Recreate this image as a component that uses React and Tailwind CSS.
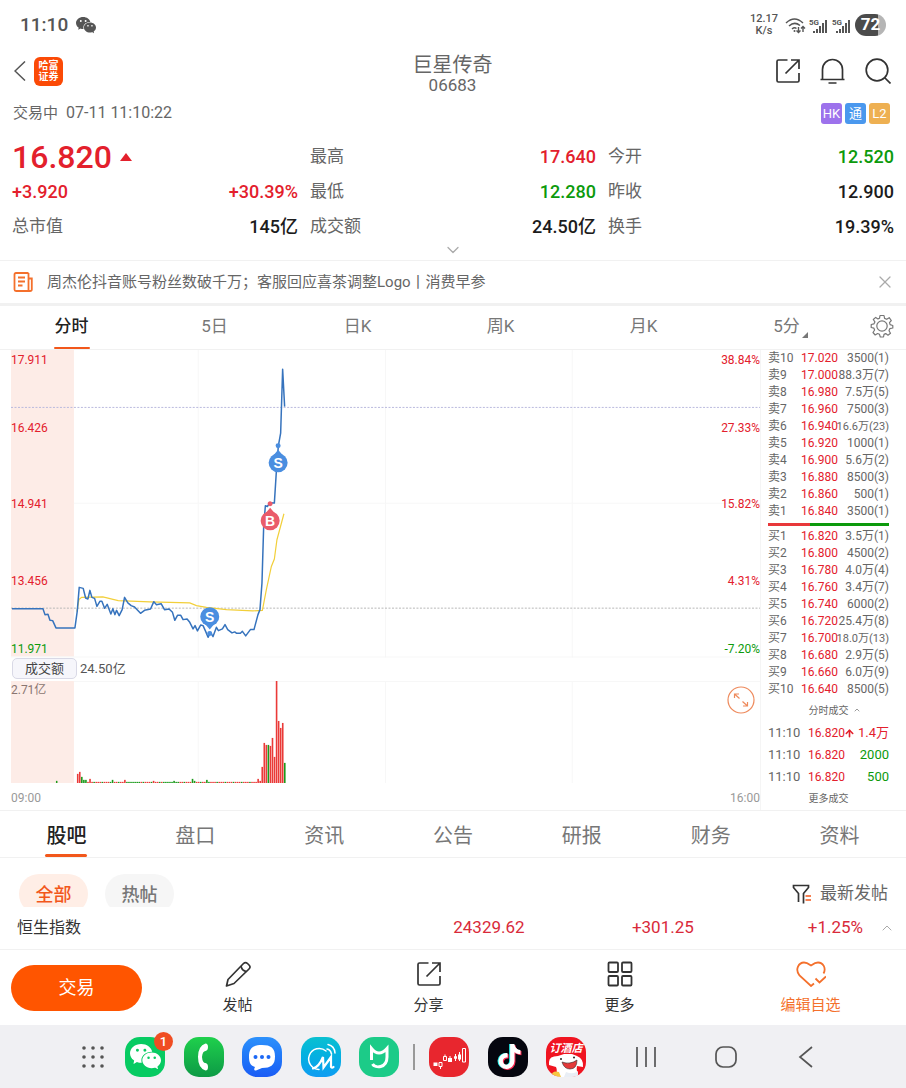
import { useState } from 'react';
import { ArrowUp, ChevronDown, ChevronUp, X } from 'lucide-react';
import { IoLogoWechat } from 'react-icons/io5';
import { FaTiktok } from 'react-icons/fa';

const QUOTES = [
  { label: '最高', value: '17.640', color: 'text-[#e3202c]' },
  { label: '今开', value: '12.520', color: 'text-[#0c9a0c]' },
  { label: '', value: '+30.39%', color: 'text-[#e3202c]' },
  { label: '最低', value: '12.280', color: 'text-[#0c9a0c]' },
  { label: '昨收', value: '12.900', color: 'text-[#1c1c1c]' },
  { label: '总市值', value: '145亿', color: 'text-[#1c1c1c]' },
  { label: '成交额', value: '24.50亿', color: 'text-[#1c1c1c]' },
  { label: '换手', value: '19.39%', color: 'text-[#1c1c1c]' },
];

const PERIODS = ['分时', '5日', '日K', '周K', '月K', '5分'];
const SECTIONS = ['股吧', '盘口', '资讯', '公告', '研报', '财务', '资料'];

const ASKS = [
  ['卖10', '17.020', '3500(1)'],
  ['卖9', '17.000', '88.3万(7)'],
  ['卖8', '16.980', '7.5万(5)'],
  ['卖7', '16.960', '7500(3)'],
  ['卖6', '16.940', '16.6万(23)'],
  ['卖5', '16.920', '1000(1)'],
  ['卖4', '16.900', '5.6万(2)'],
  ['卖3', '16.880', '8500(3)'],
  ['卖2', '16.860', '500(1)'],
  ['卖1', '16.840', '3500(1)'],
];

const BIDS = [
  ['买1', '16.820', '3.5万(1)'],
  ['买2', '16.800', '4500(2)'],
  ['买3', '16.780', '4.0万(4)'],
  ['买4', '16.760', '3.4万(7)'],
  ['买5', '16.740', '6000(2)'],
  ['买6', '16.720', '25.4万(8)'],
  ['买7', '16.700', '18.0万(13)'],
  ['买8', '16.680', '2.9万(5)'],
  ['买9', '16.660', '6.0万(9)'],
  ['买10', '16.640', '8500(5)'],
];

const TRADES = [
  { time: '11:10', price: '16.820', qty: '1.4万', up: true },
  { time: '11:10', price: '16.820', qty: '2000', up: false },
  { time: '11:10', price: '16.820', qty: '500', up: false },
];

const AXIS = [
  { y: 14, price: '17.911', pct: '38.84%', up: true },
  { y: 82, price: '16.426', pct: '27.33%', up: true },
  { y: 158, price: '14.941', pct: '15.82%', up: true },
  { y: 235, price: '13.456', pct: '4.31%', up: true },
  { y: 303, price: '11.971', pct: '-7.20%', up: false },
];

const PRICE_LINE =
  '1,259 32,259 34,265 37,264.7 39,270.7 41.7,271 45,278.3 64,278.3 66.3,261.7 68.3,237.7 72.3,238.7 74.7,248.3 77,249.3 79,240.7 81,247.7 83.7,248.7 86,256.7 89,251.7 91,251.7 93.7,258.7 96.3,254.7 100,264.3 102,259 104,265 105.7,260.7 108.3,266 111.3,260 113.7,247.7 117,253.3 120.3,256 123.7,257.3 129.7,263.7 133.7,260.7 139.7,259.3 143,252 145.7,255 150.3,254 153.7,260 158.3,259.3 161.7,262.7 164,270.7 166.7,265.7 170,265.7 172.3,270 176.3,269.3 179,272.7 182.3,279.3 184.3,276 186.7,281.3 190,275.3 192.3,276 195,282 197.3,287.7 199.7,282.7 202.3,287 205.7,277.7 207.7,281 211.7,279.3 214.3,275 217,280 221.3,283.3 224,282.3 226,283.7 229.7,283.7 231.7,281.7 235,286.3 239.7,280 243.3,280 247.3,265 249.3,260 251.3,233.3 253,176.7 254.7,156 256.7,156.7 259.3,153 263.7,153.3 265.7,121.7 267.7,96 270,83.3 272,19.3 274,56.7';

const AVG_LINE =
  '66,262 68,250 70.7,247.7 92,247.3 107.3,251 139,252.3 179,253.3 185.7,256 195.7,257.7 215.7,260 242,261.3 251.7,260.7 255.7,240 260.7,216.7 263.7,209.3 266.3,190 273.3,164';

// minute bars that stand out, index -> [height, isUp]; the rest are flat
const SPIKES = {
  0: [10, 1], 1: [12, 1], 2: [7, 0], 3: [4, 0], 4: [4, 0], 5: [2, 1], 6: [5, 1],
  17: [4, 0], 23: [4, 1], 37: [3, 1], 47: [3, 0], 56: [5, 0], 57: [3, 0], 63: [4, 0],
  88: [5, 1], 89: [3, 1], 90: [17, 1], 91: [41, 1], 92: [39, 1], 93: [39, 0],
  94: [38, 1], 95: [46, 1], 96: [27, 1], 97: [103, 1], 98: [63, 1], 99: [56, 1],
  100: [61, 1], 101: [21, 0],
};

const VOLUME = Array.from({ length: 102 }, (_, i) => {
  if (SPIKES[i]) return { h: SPIKES[i][0], up: SPIKES[i][1] === 1 };
  const green = (i > 23 && i < 31) || (i > 41 && i < 50) || i % 4 === 0;
  return { h: 2, up: !green };
});

const ShareIcon = ({ className }) => (
  <svg viewBox="0 0 24 24" className={className} fill="none" stroke="currentColor" strokeWidth="1.7">
    <path d="M11.5 1H2.5Q1 1 1 2.5V21.5Q1 23 2.5 23H21.5Q23 23 23 21.5V14" />
    <path d="M15 1H23V10M23 1L9.5 14.5" />
  </svg>
);

const SignalIcon = () => (
  <div className="flex w-5 flex-col">
    <span className="text-[8px] leading-[9px] font-bold">5G</span>
    <svg viewBox="0 0 20 10" className="-mt-1 h-[10px] w-5 overflow-visible" fill="currentColor">
      <rect x="4" y="8" width="2" height="2" />
      <rect x="7" y="6" width="2" height="4" />
      <rect x="10" y="3" width="2" height="7" />
      <rect x="13" y="0" width="2" height="10" />
      <rect x="16" y="-3" width="2" height="13" />
    </svg>
  </div>
);

const StatusBar = () => (
  <div className="flex h-[50px] items-center justify-between px-5 text-[#555]">
    <div className="flex items-center gap-2">
      <span className="text-[19px] font-medium">11:10</span>
      <IoLogoWechat className="size-5" />
    </div>
    <div className="flex items-center gap-[3px]">
      <div className="mr-1 text-center text-[11px] leading-3 font-medium">
        <div>12.17</div>
        <div>K/s</div>
      </div>
      <svg viewBox="0 0 21 17" className="h-[17px] w-[21px]" fill="none" stroke="currentColor" strokeWidth="1.5">
        <path d="M1 6Q9.500 -2 18 6M4 9Q9.500 4 15 8.500M7 12Q9.500 10 11.500 11.500" />
        <circle cx="9.500" cy="14" r="1" fill="currentColor" stroke="none" />
        <path d="M13.500 10V15.500M11.500 13.500L13.500 15.500L15.500 13.500M18 15V9.500M16 11.500L18 9.500L20 11.500" strokeWidth="1.400" />
      </svg>
      <SignalIcon />
      <SignalIcon />
      <div className="flex h-[22px] w-[31px] items-center justify-center rounded-full bg-linear-to-r from-[#4b4b4b] from-74% to-[#b5b5b5] to-74% text-[17px] font-bold text-white">
        72
      </div>
    </div>
  </div>
);

const Header = () => (
  <header className="flex h-[42px] items-center text-[#333]">
    <div className="flex flex-1 items-center gap-2 pl-[14px]">
      <button type="button" aria-label="返回" className="text-[#555]">
        <svg viewBox="0 0 12 20" className="h-5 w-3" fill="none" stroke="currentColor" strokeWidth="1.5">
          <path d="M11 0.500L1 10L11 19.500" />
        </svg>
      </button>
      <div className="flex size-[29px] flex-col items-center justify-center rounded-md bg-[#fb4a06] text-[10px] leading-[11px] font-bold text-white">
        <span>哈富</span>
        <span>证券</span>
      </div>
    </div>
    <div className="pt-[3px] text-center text-[#666]">
      <h1 className="text-[20px] leading-6">巨星传奇</h1>
      <div className="text-[17px] leading-4">06683</div>
    </div>
    <div className="flex flex-1 items-center justify-end gap-5 pr-[15px]">
      <button type="button" aria-label="分享">
        <ShareIcon className="size-6" />
      </button>
      <button type="button" aria-label="提醒">
        <svg viewBox="0 0 25 26" className="h-[26px] w-[25px]" fill="none" stroke="currentColor" strokeWidth="1.700">
          <path d="M2.500 21.500V11.500A10 10 0 0 1 22.500 11.500V21.500M0.500 21.500H24.500M8.500 25H16.500" />
        </svg>
      </button>
      <button type="button" aria-label="搜索">
        <svg viewBox="0 0 26 26" className="size-[26px]" fill="none" stroke="currentColor" strokeWidth="1.700">
          <circle cx="12" cy="12" r="10.800" />
          <path d="M19.500 19.500L25.500 25.500" />
        </svg>
      </button>
    </div>
  </header>
);

const Quote = () => (
  <section>
    <div className="flex h-[42px] items-center justify-between px-[13px] text-[#666]">
      <div className="flex items-center gap-2">
        <span className="text-[15px]">交易中</span>
        <span className="text-[16px]">07-11 11:10:22</span>
      </div>
      <div className="flex gap-[3px] pr-[3px] text-[13px] leading-[21px] text-white">
        <span className="size-[21px] rounded-[3px] bg-[#9d72ec] text-center">HK</span>
        <span className="size-[21px] rounded-[3px] bg-[#4a98ee] text-center">通</span>
        <span className="size-[21px] rounded-[3px] bg-[#eeb052] text-center">L2</span>
      </div>
    </div>
    <div className="grid auto-rows-[35px] grid-cols-3 gap-x-3 px-3 pt-[5px]">
      <div className="flex items-center gap-2 text-[#e3202c]">
        <span className="text-[32px] leading-8 font-medium">16.820</span>
        <svg viewBox="0 0 12 8" className="h-2 w-3" fill="currentColor">
          <path d="M6 0L12 8H0Z" />
        </svg>
      </div>
      {QUOTES.map((q) => (
        <div key={q.value} className="flex items-center justify-between">
          {q.label ? (
            <span className="text-[17px] text-[#666]">{q.label}</span>
          ) : (
            <span className="text-[18px] font-medium text-[#e3202c]">+3.920</span>
          )}
          <span className={`text-[18px] font-medium ${q.color}`}>{q.value}</span>
        </div>
      ))}
    </div>
    <div className="flex h-4 items-start justify-center">
      <button type="button" aria-label="展开" className="-mt-1 text-[#aaa]">
        <ChevronDown className="size-5" strokeWidth={1.5} />
      </button>
    </div>
  </section>
);

const News = () => (
  <div className="flex h-[46px] items-center border-t border-b-3 border-[#f1f1f1] pr-[11px] pl-[13px] text-[#666]">
    <svg viewBox="0 0 20 20" className="h-5 w-5 text-[#f4702c]" fill="none" stroke="currentColor" strokeWidth="1.800">
      <path d="M15.500 1H3Q1.500 1 1.500 2.500V17.500Q1.500 19 3 19H17Q18.800 19 18.800 17.500V6.500H15.500M15.500 1V18.500M5 5.500H12M5 9.500H12M5 13.500H9.500" />
    </svg>
    <a href="#news" className="ml-[14px] flex-1 text-[15px]">
      周杰伦抖音账号粉丝数破千万；客服回应喜茶调整Logo丨消费早参
    </a>
    <button type="button" aria-label="关闭" className="text-[#aaa]">
      <X className="size-5" strokeWidth={1.5} />
    </button>
  </div>
);

const Pin = ({ x, y, label, down, color }) => (
  <g fill={color}>
    <circle cx={x} cy={down ? y + 17 : y - 17} r="2.500" />
    <path d={down ? `M${x - 5} ${y + 7}L${x} ${y + 13}L${x + 5} ${y + 7}Z` : `M${x - 5} ${y - 7}L${x} ${y - 13}L${x + 5} ${y - 7}Z`} />
    <circle cx={x} cy={y} r="9.500" />
    <text x={x} y={y + 5} textAnchor="middle" className="fill-white font-['Liberation_Sans',sans-serif] text-[14px] font-bold">
      {label}
    </text>
  </g>
);

const PriceChart = () => (
  <svg viewBox="0 0 750 308" className="block w-full">
    <rect width="63" height="307" fill="#fdece7" />
    <path d="M187.500 0V308M375 0V308M562 0V308M63 153.500H750M0 307.500H750" stroke="#f7f7f7" fill="none" />
    <path d="M0 57.500H750" stroke="#b9b9dd" strokeDasharray="2 1.500" />
    <path d="M0 258.500H750" stroke="#b8b8b8" strokeDasharray="2 1.500" />
    <polyline points={AVG_LINE} fill="none" stroke="#f2cf3a" strokeWidth="1.200" />
    <polyline points={PRICE_LINE} fill="none" stroke="#3673bd" strokeWidth="1.500" strokeLinejoin="round" />
    <Pin x={199} y={267} label="S" down color="#4a8ee0" />
    <Pin x={259.5} y={171} label="B" color="#ea5b6a" />
    <Pin x={267.5} y={113} label="S" color="#4a8ee0" />
    {AXIS.map((a) => (
      <g key={a.price} className={a.up ? 'fill-[#e3202c] text-[12px]' : 'fill-[#0c9a0c] text-[12px]'}>
        <text x="0" y={a.y}>{a.price}</text>
        <text x="750" y={a.y} textAnchor="end">{a.pct}</text>
      </g>
    ))}
  </svg>
);

const VolumeChart = () => (
  <svg viewBox="0 0 750 103" className="block w-full">
    <rect width="63" height="103" fill="#fdece7" />
    <path d="M187.500 0V103M375 0V103M562 0V103M63 0.500H750" stroke="#f7f7f7" fill="none" />
    <rect x="45" y="100" width="1.500" height="3" fill="#1b9a1b" />
    {VOLUME.map((v, i) => (
      <rect key={i} x={66 + i * 2.053} y={103 - v.h} width="1.600" height={v.h} fill={v.up ? '#ea3a38' : '#1b9a1b'} />
    ))}
    <text x="0" y="13" className="fill-[#8a7571] text-[12px]">2.71亿</text>
  </svg>
);

const BookTable = ({ rows, caption }) => (
  <table className="w-full table-fixed text-[12px] text-[#666]" aria-label={caption}>
    <tbody>
      {rows.map(([level, price, qty]) => (
        <tr key={level} className="h-[17px] leading-[17px]">
          <td className="w-[33px] p-0">{level}</td>
          <td className="w-9 p-0 text-[#e3202c]">{price}</td>
          <td className="p-0 text-right whitespace-nowrap">
            <span className={qty.length > 8 ? '-ml-1 text-[11px]' : ''}>{qty}</span>
          </td>
        </tr>
      ))}
    </tbody>
  </table>
);

const OrderBook = () => (
  <aside className="mr-[17px] ml-[7px] w-[121px] shrink-0 text-[#666]">
    <BookTable rows={ASKS} caption="卖盘" />
    <div className="flex h-2 items-center">
      <div className="h-[3px] w-[35%] bg-[#e8383a]" />
      <div className="h-[3px] flex-1 bg-[#0c9a0c]" />
    </div>
    <BookTable rows={BIDS} caption="买盘" />
    <button type="button" className="flex h-6 w-full items-center justify-center gap-1 pl-3 text-[10px]">
      分时成交
      <ChevronUp className="size-2" />
    </button>
    <table className="w-full table-fixed" aria-label="成交明细">
      <tbody>
        {TRADES.map((t) => (
          <tr key={t.qty} className="h-[22px] text-[13px] leading-[22px]">
            <td className="w-10 p-0">{t.time}</td>
            <td className="w-[46px] p-0 text-[12px] text-[#e3202c]">
              <span className="flex items-center">
                {t.price}
                {t.up && <ArrowUp className="-ml-px size-[11px] shrink-0" strokeWidth={3.5} />}
              </span>
            </td>
            <td className={`p-0 text-right ${t.up ? 'text-[#e3202c]' : 'text-[#0c9a0c]'}`}>{t.qty}</td>
          </tr>
        ))}
      </tbody>
    </table>
    <button type="button" className="block h-[22px] w-full text-center text-[10px] leading-[22px]">
      更多成交
    </button>
  </aside>
);

const Tabs = ({ period, setPeriod }) => (
  <nav className="flex h-11 border-b border-[#f1f1f1]">
    {PERIODS.map((p) => (
      <button
        key={p}
        type="button"
        onClick={() => setPeriod(p)}
        className="relative flex flex-1 items-center justify-center pb-px text-[17px] text-[#777]"
      >
        <span className={p === period ? 'font-medium text-[#222]' : ''}>{p}</span>
        {p === period && <span className="absolute bottom-0 h-[2px] w-9 rounded-full bg-[#f2571b]" />}
        {p === '5分' && (
          <svg viewBox="0 0 6 6" className="absolute right-[50px] bottom-[11px] size-[6px] fill-[#777]">
            <path d="M6 0V6H0Z" />
          </svg>
        )}
      </button>
    ))}
    <button type="button" aria-label="设置" className="flex w-12 items-center justify-center pb-1 text-[#777]">
      <svg viewBox="0 0 24 24" className="size-6" fill="none" stroke="currentColor" strokeWidth="1.200" strokeLinejoin="round">
        <path d="M10 1.500H14L14.600 4.400L16.700 5.300L19.200 3.700L21.300 6.500L19.500 8.600L20.100 10.700L22.800 11.500V14L19.800 14.700L19 16.800L20.500 19.200L18 21.200L15.700 19.600L14 20.400L13.500 23H10.300L9.500 20.300L7.600 19.500L5.200 21L3 18.500L4.600 16L3.900 14.200L1.200 13.500V10.500L4 9.800L4.900 7.900L3.300 5.500L5.700 3.400L8 4.900L9.500 4.300Z" />
        <circle cx="12" cy="12" r="5.200" />
      </svg>
    </button>
  </nav>
);

const Feed = () => (
  <section>
    <nav className="flex h-12 border-t border-b border-[#f1f1f1] px-0.5">
      {SECTIONS.map((s, i) => (
        <button
          key={s}
          type="button"
          className="relative flex flex-1 items-center justify-center pt-[3px] text-[20px] text-[#777]"
        >
          <span className={i === 0 ? 'font-medium text-[#222]' : ''}>{s}</span>
          {i === 0 && <span className="absolute bottom-0 h-[3px] w-[42px] rounded-full bg-[#f2571b]" />}
        </button>
      ))}
    </nav>
    <div className="flex h-[49px] items-start justify-between overflow-hidden pt-4 pr-[18px] pl-[19px]">
      <div className="flex gap-[17px] text-[18px] font-medium">
        <button type="button" className="h-10 w-[69px] shrink-0 rounded-full bg-[#ffeee6] text-[#f2571b]">
          全部
        </button>
        <button type="button" className="h-10 w-[69px] shrink-0 rounded-full bg-[#f6f6f6] text-[#777]">
          热帖
        </button>
      </div>
      <button type="button" className="flex h-10 items-center gap-2 text-[17px] text-[#666]">
        <svg viewBox="0 0 20 20" className="size-5" fill="none" stroke="#333" strokeWidth="1.700">
          <path d="M6.500 18V9.500L1.500 3.500V1.500H16.500V3.500L11.500 9.500V19.500" />
          <path d="M13.500 12H19M13.500 16H19" stroke="#f2571b" />
        </svg>
        最新发帖
      </button>
    </div>
    <div className="flex h-[43px] items-center border-b border-[#f1f1f1] pl-[17px]">
      <div className="grid flex-1 grid-cols-5 items-center text-right text-[17px] text-[#d92a3a]">
        <span className="text-left text-[16px] text-[#333]">恒生指数</span>
        <span className="col-span-2">24329.62</span>
        <span>+301.25</span>
        <span>+1.25%</span>
      </div>
      <button type="button" aria-label="展开指数" className="flex w-[43px] justify-center pl-1 text-[#aaa]">
        <ChevronUp className="size-4" strokeWidth={1.5} />
      </button>
    </div>
  </section>
);

const Actions = () => (
  <div className="flex h-[75px] items-center pl-[11px] text-[#333]">
    <button type="button" className="h-[46px] w-[131px] rounded-full bg-[#ff5500] text-[18px] text-white">
      交易
    </button>
    <div className="grid flex-1 grid-cols-4 text-[15px] leading-5">
      <button type="button" className="flex flex-col items-center gap-2">
        <svg viewBox="0 0 26 26" className="size-[26px]" fill="none" stroke="currentColor" strokeWidth="1.700" strokeLinejoin="round">
          <path d="M1.500 25L3 18.500L18.500 2.500Q20.500 0.500 22.500 2.500L24 4Q26 6 24 8L9 22.500Z" />
          <path d="M16 5Q17 10 21.500 10.500" />
        </svg>
        发帖
      </button>
      <button type="button" className="flex flex-col items-center gap-2">
        <span className="flex size-[26px] items-center justify-center">
          <ShareIcon className="size-6" />
        </span>
        分享
      </button>
      <button type="button" className="flex flex-col items-center gap-2">
        <svg viewBox="0 0 26 26" className="size-[26px]" fill="none" stroke="currentColor" strokeWidth="1.800">
          <rect x="1.500" y="1.500" width="9.500" height="9.500" rx="1" />
          <rect x="15" y="1.500" width="9.500" height="9.500" rx="1" />
          <rect x="1.500" y="15" width="9.500" height="9.500" rx="1" />
          <rect x="15" y="15" width="9.500" height="9.500" rx="1" />
        </svg>
        更多
      </button>
      <button type="button" className="flex flex-col items-center gap-2 text-[#f4702c]">
        <svg viewBox="0 0 30 26" className="h-[26px] w-[30px]" fill="none" stroke="currentColor" strokeWidth="1.800">
          <path d="M18 22.500L15 25L3.500 14.500C-1.500 8 3 1.500 8 1.500C11.500 1.500 13.500 3.500 15 4.500C16.500 3.500 18.500 1.500 22 1.500C27 1.500 30.500 7 27.500 12.500" />
          <path d="M19.500 17.500L23.500 21.500L30 15.500" />
        </svg>
        编辑自选
      </button>
    </div>
  </div>
);

const AppTile = ({ label, className, children }) => (
  <button type="button" aria-label={label} className={`relative size-10 overflow-hidden rounded-[15px] ${className}`}>
    {children}
  </button>
);

const Dock = () => (
  <footer className="flex h-[63px] items-center justify-center bg-[#f0f0f3] pr-[6px] text-[#555]">
    <button type="button" aria-label="所有应用">
      <svg viewBox="0 0 22 22" className="size-[22px]" fill="currentColor">
        {[2, 11, 20].map((x) => [2, 11, 20].map((y) => <circle key={`${x}-${y}`} cx={x} cy={y} r="1.800" />))}
      </svg>
    </button>
    <div className="ml-[21px] flex w-[274px] justify-between">
      <div className="relative size-10">
        <AppTile label="微信" className="bg-[#07cb62]">
          <IoLogoWechat className="mx-auto size-[31px] text-white" />
        </AppTile>
        <span className="absolute -top-[5px] -right-2 size-[19px] rounded-full bg-[#f04d22] text-center text-[13px] leading-[19px] font-medium text-white">
          1
        </span>
      </div>
      <AppTile label="电话" className="bg-linear-to-b from-[#1fd04c] to-[#0d9a45]">
        <svg viewBox="0 0 40 40" className="size-10">
          <path d="M21.500 6.500Q14 9 14 20Q14 31 21.500 33.500Q24 33.500 24 30Q24 26.500 21.500 26Q18.500 26 18 20Q18.500 14 21.500 14Q24 13.500 24 10Q24 6.500 21.500 6.500Z" fill="#fff" />
        </svg>
      </AppTile>
      <AppTile label="信息" className="bg-linear-to-b from-[#2c90fb] to-[#1c5cf5]">
        <svg viewBox="0 0 40 40" className="size-10">
          <path d="M20 8C29 8 33 11 33 19.500C33 28 29 31 20 31L14 33.500Q11.500 34 12.500 31L13 30C8 28.500 7 25 7 19.500C7 11 11 8 20 8Z" fill="#fff" />
          <g fill="#1c68f5">
            <circle cx="13.500" cy="20" r="2" />
            <circle cx="20" cy="20" r="2" />
            <circle cx="26.500" cy="20" r="2" />
          </g>
        </svg>
      </AppTile>
      <AppTile label="美的美居" className="bg-linear-to-b from-[#0bc0d0] to-[#0f9cf2]">
        <svg viewBox="0 0 40 40" className="size-10" fill="none" stroke="#fff" strokeLinecap="round">
          <path d="M25 14A10.500 10.500 0 1 0 18 32.500" strokeWidth="1.500" />
          <path d="M12 31.500Q18 30 22 20L22.500 30.500L30 20V30Q31 31.500 32.500 30" strokeWidth="2.200" />
          <path d="M26 12Q29.500 12.500 30.500 17M27 7.500Q33.500 9 34 16" strokeWidth="1.500" />
        </svg>
      </AppTile>
      <AppTile label="米家" className="bg-[#1ccb88]">
        <svg viewBox="0 0 40 40" className="size-10" fill="none" stroke="#fff" strokeWidth="3">
          <path d="M12.500 23V11.500Q16 16 20 16Q24 16 28 11.500V20C28 31.500 16 31.500 13.500 27" />
        </svg>
      </AppTile>
    </div>
    <div className="mx-[14px] h-[26px] w-0.5 bg-[#999]" />
    <div className="flex w-[157px] justify-between">
      <AppTile label="行情" className="bg-[#e8262e]">
        <svg viewBox="0 0 40 40" className="size-10" fill="none" stroke="#fff">
          <path d="M10 25.500H13V29.500H10ZM11.500 29.500V32M14.500 19.500H17.500V23.500H14.500ZM16 17.500V19.500M25.500 19.500H27.500V21.500H25.500ZM26.500 17V24M33.500 11.500H36.500V25H33.500Z" />
          <path d="M4.500 25.500H8.500V29H4.500ZM19 21H23V25H19ZM29 17.500H32V22.500H29Z" fill="#fff" stroke="none" />
          <path d="M21 19V21M30.500 15V24" />
        </svg>
      </AppTile>
      <AppTile label="抖音" className="bg-[#05060f]">
        <FaTiktok className="absolute top-[7px] left-[8px] size-[25px] text-[#25f4ee]" />
        <FaTiktok className="absolute top-[8px] left-[10px] size-[25px] text-[#fe2c55]" />
        <FaTiktok className="absolute top-[7px] left-[9px] size-[25px] text-white" />
      </AppTile>
      <AppTile label="订酒店" className="bg-[#f01420]">
        <svg viewBox="0 0 40 40" className="absolute inset-0 size-10">
          <path d="M3 25Q3 19 12 19L18 17H26L31 19Q38 22 37 30L31 29Q30 34 33 40H9Q12 34 10 30L3 28Z" fill="#fff" />
          <path d="M16 25Q24 28 31 23Q31 32 24 32Q18 32 16 25Z" fill="#e33a3a" stroke="#333" strokeWidth="0.600" />
          <circle cx="15" cy="22" r="1" fill="#222" />
          <circle cx="28" cy="20.500" r="1" fill="#222" />
          <path d="M5 40Q6 33 13 35L15 40Z" fill="#f5c842" />
          <path d="M20 35Q27 38 32 34V40H18Z" fill="#e9eef5" />
        </svg>
        <span className="absolute inset-x-0 top-[6px] text-center text-[11px] leading-3 font-bold whitespace-nowrap text-white italic">
          订酒店
        </span>
      </AppTile>
    </div>
    <div className="ml-12 flex items-center gap-14">
      <button type="button" aria-label="最近任务">
        <svg viewBox="0 0 24 24" className="size-6" fill="none" stroke="currentColor" strokeWidth="1.700">
          <path d="M3 2V22M12 2V22M21 2V22" />
        </svg>
      </button>
      <button type="button" aria-label="主屏幕">
        <svg viewBox="0 0 24 24" className="size-6" fill="none" stroke="currentColor" strokeWidth="1.700">
          <rect x="2" y="2" width="20" height="20" rx="7" />
        </svg>
      </button>
      <button type="button" aria-label="系统返回">
        <svg viewBox="0 0 24 24" className="size-6" fill="none" stroke="currentColor" strokeWidth="1.700">
          <path d="M18 2L6 12L18 22" />
        </svg>
      </button>
    </div>
  </footer>
);

const App = () => {
  const [period, setPeriod] = useState('分时');

  return (
    <div className="min-h-screen bg-white font-['Roboto','Noto_Sans_CJK_SC',sans-serif]">
      <StatusBar />
      <Header />
      <Quote />
      <News />
      <Tabs period={period} setPeriod={setPeriod} />
      <main className="flex pl-[11px]">
        <div className="relative min-w-0 flex-1 border-r border-[#f5f5f5]">
          <PriceChart />
          <div className="flex h-[23px] items-start gap-[3px] text-[#555]">
            <button
              type="button"
              className="ml-[1px] h-[21px] w-[65px] rounded-[5px] border border-[#d9d9e6] bg-[#f6f6fb] text-[13px] leading-[19px] text-[#444]"
            >
              成交额
            </button>
            <span className="text-[13px] leading-[21px]">24.50亿</span>
          </div>
          <VolumeChart />
          <div className="flex h-[26px] items-center justify-between pt-[3px] text-[12px] text-[#999]">
            <span>09:00</span>
            <span>16:00</span>
          </div>
          <button
            type="button"
            aria-label="全屏"
            className="absolute right-[5px] bottom-24 size-7 text-[#ee8a5c]"
          >
            <svg viewBox="0 0 28 28" className="size-7" fill="none" stroke="currentColor" strokeWidth="1.200">
              <circle cx="14" cy="14" r="13" />
              <path d="M12.500 12.500L7.500 8M7.500 12V8H12M15.500 15.500L20.500 20M20.500 16V20H16" />
            </svg>
          </button>
        </div>
        <OrderBook />
      </main>
      <Feed />
      <Actions />
      <Dock />
    </div>
  );
};

export default App;
